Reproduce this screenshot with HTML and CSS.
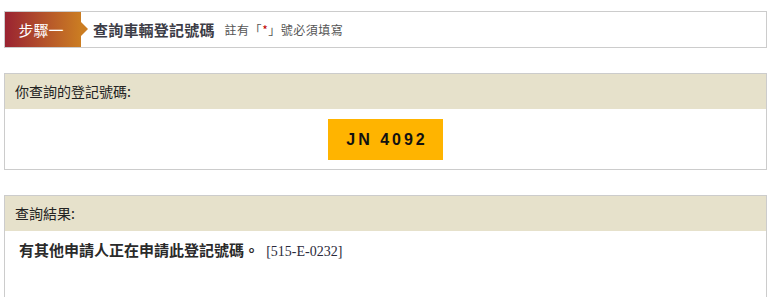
FILE: index.html
```html
<!DOCTYPE html>
<html lang="zh-Hant">
<head>
<meta charset="utf-8">
<link rel="stylesheet" href="styles.css">
</head>
<body>
<div class="page">
  <div class="step">
    <div class="step-label">步驟一<span class="arrow"></span></div>
    <div class="step-title">查詢車輛登記號碼</div>
    <div class="step-note">註有「<span class="req">*</span>」號必須填寫</div>
  </div>

  <div class="panel">
    <div class="panel-head">你查詢的登記號碼:</div>
    <div class="panel-body plate-body">
      <div class="plate">JN 4092</div>
    </div>
  </div>

  <div class="panel panel-last">
    <div class="panel-head">查詢結果:</div>
    <div class="panel-body result-body">
      <span class="result-msg">有其他申請人正在申請此登記號碼。</span>
      <span class="result-code">[515-E-0232]</span>
    </div>
  </div>
</div>
</body>
</html>
```

FILE: styles.css
```css
html, body {
  margin: 0;
  padding: 0;
  background: #fff;
}
body {
  font-family: "Noto Sans CJK TC", "Liberation Sans", sans-serif;
  color: #222;
}
.page {
  width: 763px;
  margin: 11px 0 0 4px;
}
.step {
  display: flex;
  align-items: center;
  border: 1px solid #cccccc;
  height: 35px;
  padding: 0;
}
.step-label {
  position: relative;
  width: 76px;
  height: 35px;
  line-height: 35px;
  text-align: center;
  color: #fff;
  font-size: 15px;
  background: linear-gradient(to right, #9a2331 0%, #b3512b 50%, #cb7d22 100%);
  margin-right: 12px;
  box-sizing: border-box;
  padding-right: 4px;
}
.arrow {
  position: absolute;
  right: -7px;
  top: 10px;
  width: 0;
  height: 0;
  border-top: 7px solid transparent;
  border-bottom: 7px solid transparent;
  border-left: 7px solid #cb7d22;
}
.step-title {
  font-size: 15px;
  font-weight: bold;
  color: #3c3c46;
  margin-right: 10px;
  letter-spacing: 0.2px;
}
.step-note {
  font-size: 12px;
  letter-spacing: 0.5px;
  color: #555;
}
.req {
  color: #c00000;
}
.panel {
  border: 1px solid #cccccc;
  margin-top: 25px;
}
.panel-head {
  background: #e6e1cb;
  height: 35px;
  line-height: 34px;
  padding-left: 10px;
  font-size: 14px;
  color: #222;
}
.plate-body {
  display: flex;
  justify-content: center;
  padding: 10px 0 9px 0;
}
.plate {
  width: 115px;
  height: 41px;
  line-height: 41px;
  background: #ffb400;
  text-align: center;
  font-family: "Liberation Sans", Arial, sans-serif;
  font-weight: bold;
  font-size: 16px;
  letter-spacing: 3px;
  color: #111;
  padding-left: 3px;
  box-sizing: border-box;
}
.result-body {
  padding: 8px 14px 60px 14px;
  font-size: 14px;
}
.result-msg {
  font-weight: bold;
  font-size: 15px;
  color: #2a2a2a;
}
.result-code {
  font-family: "Liberation Serif", "Times New Roman", serif;
  font-size: 14px;
  color: #2a2a3a;
  margin-left: 4px;
}
```
